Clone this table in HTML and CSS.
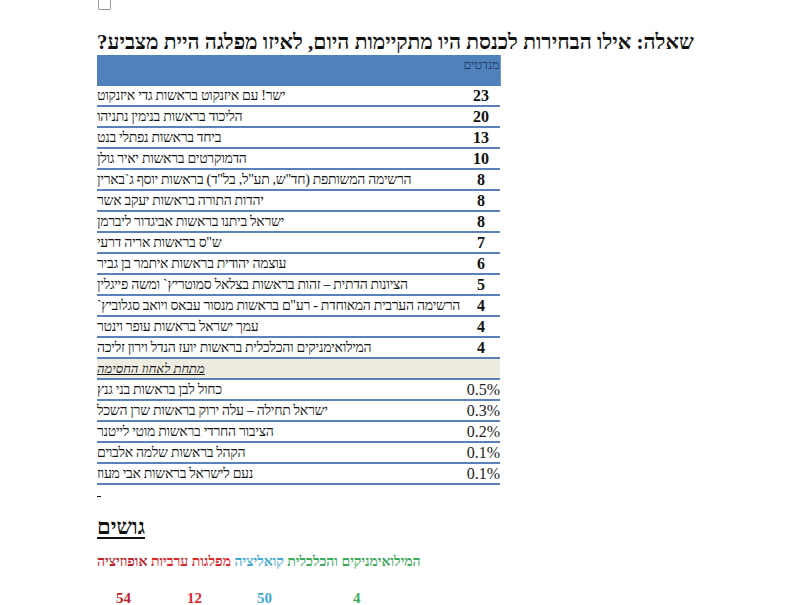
FILE: index.html
```html
<!DOCTYPE html>
<html lang="he">
<head>
<meta charset="utf-8">
<link rel="stylesheet" href="styles.css">
</head>
<body>
<div class="page">
  <div class="checkbox"></div>
  <h1 class="title" dir="rtl">שאלה: אילו הבחירות לכנסת היו מתקיימות היום, לאיזו מפלגה היית מצביע?</h1>
  <table class="poll" dir="rtl">
    <colgroup><col class="c-num"><col class="c-name"></colgroup>
    <thead>
      <tr><th class="num-h">מנדטים</th><th class="name-h"></th></tr>
    </thead>
    <tbody>
      <tr><td class="num">23</td><td class="name">ישר! עם איזנקוט בראשות גדי איזנקוט</td></tr>
      <tr><td class="num">20</td><td class="name">הליכוד בראשות בנימין נתניהו</td></tr>
      <tr><td class="num">13</td><td class="name">ביחד בראשות נפתלי בנט</td></tr>
      <tr><td class="num">10</td><td class="name">הדמוקרטים בראשות יאיר גולן</td></tr>
      <tr><td class="num">8</td><td class="name">הרשימה המשותפת (חד"ש, תע"ל, בל"ד) בראשות יוסף ג`בארין</td></tr>
      <tr><td class="num">8</td><td class="name">יהדות התורה בראשות יעקב אשר</td></tr>
      <tr><td class="num">8</td><td class="name">ישראל ביתנו בראשות אביגדור ליברמן</td></tr>
      <tr><td class="num">7</td><td class="name">ש"ס בראשות אריה דרעי</td></tr>
      <tr><td class="num">6</td><td class="name">עוצמה יהודית בראשות איתמר בן גביר</td></tr>
      <tr><td class="num">5</td><td class="name">הציונות הדתית – זהות בראשות בצלאל סמוטריץ` ומשה פייגלין</td></tr>
      <tr><td class="num">4</td><td class="name">הרשימה הערבית המאוחדת - רע"ם בראשות מנסור עבאס ויואב סגלוביץ`</td></tr>
      <tr><td class="num">4</td><td class="name">עמך ישראל בראשות עופר וינטר</td></tr>
      <tr><td class="num">4</td><td class="name">המילואימניקים והכלכלית בראשות יועז הנדל וירון זליכה</td></tr>
      <tr class="below"><td></td><td class="name"><span class="below-label">מתחת לאחוז החסימה</span></td></tr>
      <tr><td class="pct">0.5%</td><td class="name">כחול לבן בראשות בני גנץ</td></tr>
      <tr><td class="pct">0.3%</td><td class="name">ישראל תחילה – עלה ירוק בראשות שרן השכל</td></tr>
      <tr><td class="pct">0.2%</td><td class="name">הציבור החרדי בראשות מוטי לייטנר</td></tr>
      <tr><td class="pct">0.1%</td><td class="name">הקהל בראשות שלמה אלבוים</td></tr>
      <tr><td class="pct">0.1%</td><td class="name">נעם לישראל בראשות אבי מעוז</td></tr>
    </tbody>
  </table>
  <div class="dash"></div>
  <h2 class="blocs-title" dir="rtl">גושים</h2>
  <p class="legend" dir="rtl"><span class="green">המילואימניקים והכלכלית</span> <span class="blue">קואליציה</span> <span class="red">מפלגות ערביות</span> <span class="dark-red">אופוזיציה</span></p>
  <div class="totals">
    <span class="total dark-red t1">54</span>
    <span class="total red t2">12</span>
    <span class="total blue t3">50</span>
    <span class="total green t4">4</span>
  </div>
</div>
</body>
</html>
```

FILE: styles.css
```css
html, body {
  margin: 0;
  padding: 0;
  background: #ffffff;
}
body {
  font-family: "Liberation Serif", "Times New Roman", serif;
  color: #111;
}
.page {
  padding-left: 97px;
  width: 600px;
  overflow: hidden;
  height: 605px;
}
.checkbox {
  width: 11px;
  height: 11px;
  border: 1px solid #9a9a9a;
  margin: -3px 0 0 1px;
  border-radius: 1px;
}
.title {
  margin: 20px 0 0 0;
  font-size: 21px;
  line-height: 24px;
  font-weight: bold;
  text-align: left;
  white-space: nowrap;
  color: #111;
}
.poll {
  margin-top: 1px;
  border-collapse: collapse;
  table-layout: fixed;
  width: 403px;
  font-size: 14px;
}
.c-num { width: 40px; }
.c-name { width: 363px; }
.poll th {
  background: #4f81bd;
  height: 28px;
  padding: 0;
  vertical-align: top;
}
.num-h {
  font-weight: normal;
  font-size: 12.5px;
  color: #1f3864;
  text-align: right;
  padding-top: 3px !important;
  border-right: 1px solid #7096c8;
}
.poll td {
  height: 19px;
  padding: 0;
  border-bottom: 2px solid #5a82b9;
  line-height: 19px;
}
.name {
  text-align: left;
  white-space: nowrap;
  letter-spacing: -0.3px;
}
.num {
  text-align: center;
  font-weight: bold;
  font-size: 16px;
  padding-left: 2px !important;
}
.pct {
  text-align: right;
  font-size: 16px;
  color: #222;
  padding-left: 3px !important;
}
.below td {
  background: #eeece1;
}
.below-label {
  font-style: italic;
  text-decoration: underline;
  font-size: 13px;
  letter-spacing: 0;
}
.dash {
  width: 4px;
  border-bottom: 1px solid #111;
  margin-top: 11px;
  height: 0;
}
.blocs-title {
  margin: 18px 0 0 0;
  font-size: 22px;
  line-height: 24px;
  font-weight: bold;
  text-align: left;
  text-decoration: underline;
  text-decoration-thickness: 2px;
  text-underline-offset: 3px;
}
.legend {
  margin: 14px 0 0 0;
  font-size: 14px;
  line-height: 17px;
  font-weight: bold;
  text-align: left;
}
.totals {
  display: flex;
  margin-top: 19px;
  font-size: 15px;
  font-weight: bold;
  line-height: 18px;
}
.total { display: block; }
.t1 { margin-left: 19px; width: 71px; }
.t2 { width: 70px; }
.t3 { width: 96px; }
.t4 { }
.green { color: #3aa95c; }
.blue { color: #3fa9d0; }
.red { color: #e0282c; }
.dark-red { color: #c0242a; }
```
